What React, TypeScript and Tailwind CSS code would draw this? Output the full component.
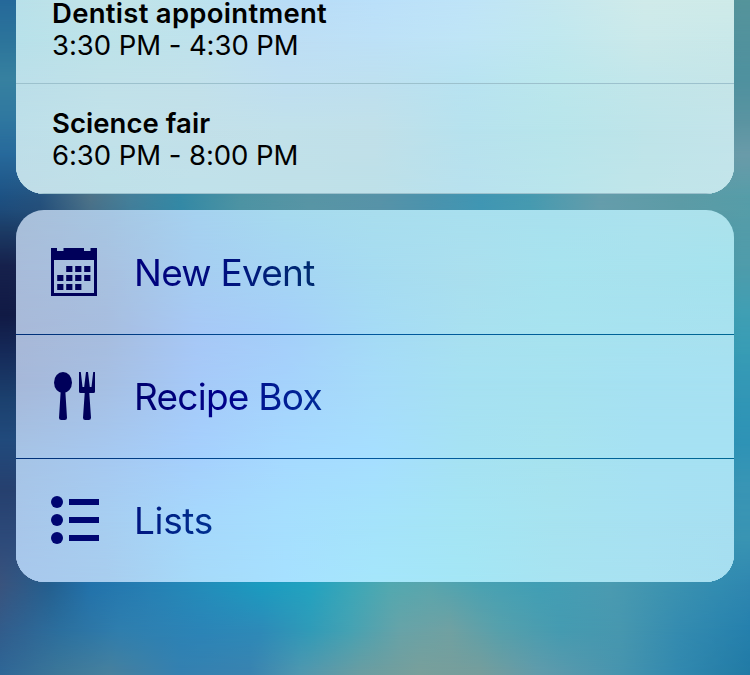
import type { CSSProperties, ReactNode } from "react";

type Row = { y: number; stops: [number, string][] };

/* A soft colour field: each row is a horizontal gradient that fades in over the row above it. */
function Mesh({ rows, width }: { rows: Row[]; width: number }) {
  return (
    <div aria-hidden className="absolute inset-0 -z-10">
      {rows.map((row, i) => {
        const image = `linear-gradient(to right, ${row.stops
          .map(([x, c]) => `${c} ${((x / width) * 100).toFixed(2)}%`)
          .join(", ")})`;
        const style: CSSProperties = { backgroundImage: image };
        if (i > 0) {
          style.maskImage = `linear-gradient(to bottom, transparent ${rows[i - 1].y}px, black ${row.y}px)`;
        }
        return <div key={row.y} className="absolute inset-0" style={style} />;
      })}
    </div>
  );
}

const even = (y: number, colors: string): Row => {
  const list = colors.split(" ");
  return { y, stops: list.map((c, i) => [(i * 718) / (list.length - 1), "#" + c]) };
};

const edge = (y: number, left: string, right: string): Row => ({
  y,
  stops: [
    [8, left],
    [742, right],
  ],
});

const wallpaper: Row[] = [
  edge(0, "#25699a", "#55949b"),
  edge(40, "#2c749b", "#52929d"),
  edge(80, "#3781a0", "#4f919f"),
  edge(120, "#2f77a0", "#5a94a1"),
  edge(155, "#27699b", "#6a9ba9"),
  {
    y: 196,
    stops: [
      [0, "#1d5284"], [40, "#25537f"], [90, "#4e7388"], [130, "#45809a"], [180, "#3489a5"],
      [240, "#4d93a3"], [310, "#5895a5"], [380, "#5793a8"], [430, "#4b93ad"], [480, "#4096b3"],
      [530, "#469ab0"], [600, "#659dab"], [680, "#5c9ba6"], [750, "#569da8"],
    ],
  },
  {
    y: 210,
    stops: [
      [0, "#1d4b7a"], [40, "#244e79"], [90, "#476f88"], [130, "#417d99"], [180, "#3388a5"],
      [240, "#4d93a3"], [310, "#5895a5"], [380, "#5793a8"], [430, "#4b93ad"], [480, "#4096b3"],
      [530, "#469ab0"], [600, "#659dab"], [680, "#5c9ba6"], [750, "#569da8"],
    ],
  },
  edge(230, "#1c3c66", "#539ca9"),
  edge(265, "#16214c", "#4f9cab"),
  edge(315, "#111a45", "#3f9fb4"),
  edge(350, "#152958", "#389cb5"),
  edge(400, "#1c416f", "#3196b6"),
  edge(440, "#214a7c", "#2e93b6"),
  edge(490, "#26406f", "#3995b5"),
  edge(540, "#2d4a7a", "#3994b3"),
  {
    y: 584,
    stops: [
      [0, "#3a537d"], [50, "#245f8f"], [90, "#2272ab"], [150, "#2680b4"], [210, "#228fbb"],
      [260, "#1b9cc0"], [310, "#22a3c0"], [350, "#3aa7b8"], [390, "#52a9b0"], [430, "#5aa6ad"],
      [480, "#4aa2b2"], [540, "#419fb5"], [610, "#4b9bb1"], [660, "#3e94b0"], [720, "#328cb1"], [750, "#2f87b0"],
    ],
  },
  {
    y: 630,
    stops: [
      [0, "#325c8b"], [60, "#2b6f9e"], [120, "#2f7eae"], [200, "#2b84b7"], [260, "#2d8ab8"],
      [310, "#309bb8"], [350, "#45a2b3"], [400, "#67a3a8"], [450, "#70a1a2"], [500, "#56a0ac"],
      [560, "#459bb1"], [620, "#4797af"], [680, "#348bb0"], [750, "#2580ad"],
    ],
  },
  {
    y: 672,
    stops: [
      [0, "#2e6696"], [60, "#3c7799"], [110, "#46809e"], [180, "#3480b0"], [250, "#3983b0"],
      [300, "#4e97af"], [360, "#699da2"], [420, "#789f9b"], [480, "#759d9c"], [540, "#5f9bab"],
      [620, "#4694ae"], [680, "#3188ae"], [750, "#217aa5"],
    ],
  },
];

const calendarGlass: Row[] = [
  even(0, "b9e1ea c3e4e7 bde3ee b8dcf6 bbe0fa bfe4f8 c5e8ef d0ebea cfebe9"),
  even(40, "b8e1ea bde3e9 bfe2ec bedef4 bde1f7 bfe5f6 c0e8ef cbe9ea c9e8e9"),
  even(83, "bcdfe9 c0e1e9 c2e1ea bfdff1 bee0ef b8e3f1 bbe7ec c2e6ea c5e5e8"),
  even(130, "bddfe9 c2e2ea c3e0e9 c1e1ea c1e0e9 b7e2ee b8e5eb bee4e9 c3e4ea"),
  even(194, "c0dce7 bee0e8 bfe1ea c0e0e8 bde0e8 b8e1ee b9e5ec c0e5e9 c2e4ea"),
];

const shortcutGlass: Row[] = [
  even(0, "a9bfd9 a7c7e3 a6d2f0 a7dbef a9deee a9e0ef a9e1ee ace2ee ade2eb"),
  even(60, "a8bcda a8c1e0 a6cef1 a5d5f4 a6dcf1 aadfee a7e3ef a8e2ee a5e3ee"),
  even(124, "a8b9d8 a7bddf a7c8f6 a5cffa a5dbf6 a8e0f0 a7e3ef a7e2f0 a8e1ef"),
  even(170, "a6b8d9 a6bfe3 a6c9f8 a5d2fc a6dcf9 a6e1f2 a6e2f0 a6e1f2 a7e1f2"),
  even(248, "a6c4e6 a6c9f1 a5d0fd a6daff a6dfff a6e2f3 a7e3ef a6e1f3 a6e1f3"),
  even(310, "a8c6e9 a7cef1 a6d8fc a6dffe a5e3fb a5e5f4 a7e3f0 a7e1f2 a7dff1"),
  even(372, "a8c8ec a8cdee a6daf9 a6e0ff a5e6fb a4e6f5 a7e3f1 a8e1f1 a6def0"),
];

function EventRow({ title, time, tracking }: { title: string; time: string; tracking: string }) {
  return (
    <div className="h-[110px] shrink-0 border-b border-[#9cc1cd] pt-[23px] pl-9 text-[27.5px] leading-8 text-black">
      <div className={`font-semibold ${tracking}`}>{title}</div>
      <div className="tracking-[-0.06px]">{time}</div>
    </div>
  );
}

function Shortcut({ icon, label, tint }: { icon: ReactNode; label: string; tint: string }) {
  return (
    <div className="flex h-[123px] items-start pt-[37px] pl-[35px]">
      <div className="w-[83px] text-[#00005a]">{icon}</div>
      <div className={`bg-linear-to-r bg-clip-text text-[37px] leading-[49px] text-transparent ${tint}`}>
        {label}
      </div>
    </div>
  );
}

function CalendarIcon() {
  const days = [
    [15, 18], [24, 18], [33, 18],
    [6, 27], [15, 27], [24, 27], [33, 27],
    [6, 36], [15, 36], [24, 36],
  ];
  return (
    <svg width="46" height="48" viewBox="0 0 46 48" fill="currentColor">
      <path fillRule="evenodd" d="M0 0H6V3H12.5V0H33V3H39.5V0H46V48H0ZM3 12V45H43V12Z" />
      {days.map(([x, y]) => (
        <rect key={`${x}-${y}`} x={x + 0.2} y={y} width="6.2" height="6" />
      ))}
    </svg>
  );
}

function UtensilsIcon() {
  return (
    <svg width="48" height="48" viewBox="0 0 48 48" fill="currentColor">
      <ellipse cx="12" cy="10.5" rx="9" ry="10.5" />
      <path d="M9.7 19H14.3L16 45.8Q16 48 13.8 48H10.2Q8 48 8 45.8Z" />
      <path d="M28 0H29.8L31.5 15H33.2L35 0H37L38.8 15H40.5L42.2 0H44V19.5Q44 21 42.5 21H38.3L40 45.8Q40 48 37.8 48H34.2Q32 48 32 45.8L33.7 21H29.5Q28 21 28 19.5Z" />
    </svg>
  );
}

function ListIcon() {
  return (
    <svg width="48" height="48" viewBox="0 0 48 48" className="fill-[#000672]">
      {[6, 24, 42].map((y) => (
        <g key={y}>
          <circle cx="6" cy={y} r="6" />
          <rect x="18" y={y - 3} width="30" height="6" />
        </g>
      ))}
    </svg>
  );
}

const rule = "h-px bg-linear-to-r from-[#002f78] via-[#00579d] to-[#006894]";

export default function App() {
  return (
    <main className="relative isolate flex h-[675px] w-[750px] flex-col gap-4 overflow-hidden px-4 font-['Inter','Liberation_Sans',sans-serif]">
      <Mesh rows={wallpaper} width={750} />
      <section className="relative isolate flex h-[194px] shrink-0 flex-col justify-end overflow-hidden rounded-b-[28px]">
        <Mesh rows={calendarGlass} width={718} />
        <EventRow title="Dentist appointment" time="3:30 PM - 4:30 PM" tracking="tracking-[0.28px]" />
        <EventRow title="Science fair" time="6:30 PM - 8:00 PM" tracking="tracking-[0.05px]" />
      </section>
      <section className="relative isolate h-[372px] shrink-0 overflow-hidden rounded-[28px]">
        <Mesh rows={shortcutGlass} width={718} />
        <div className="pt-px">
          <Shortcut icon={<CalendarIcon />} label="New Event" tint="tracking-[-0.75px] from-[#00007c] via-[#000f80] to-[#002b70]" />
          <div className={rule} />
          <Shortcut icon={<UtensilsIcon />} label="Recipe Box" tint="tracking-[-0.75px] from-[#00006e] via-[#00008c] to-[#002a98]" />
          <div className={rule} />
          <Shortcut icon={<ListIcon />} label="Lists" tint="tracking-[-0.35px] from-[#001480] to-[#003090]" />
        </div>
      </section>
    </main>
  );
}
